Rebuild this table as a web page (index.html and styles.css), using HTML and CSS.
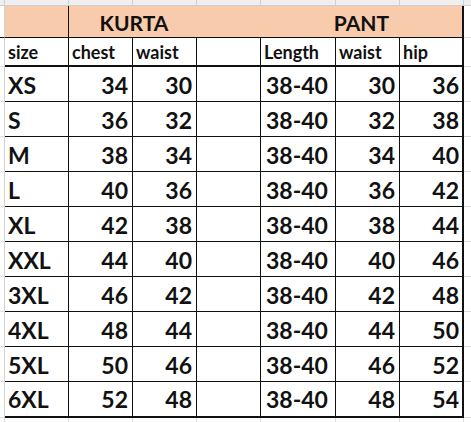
FILE: index.html
```html
<!DOCTYPE html>
<html>
<head>
<meta charset="utf-8">
<link rel="stylesheet" href="styles.css">
</head>
<body>
<div class="sheet">
  <div class="cell top"></div><div class="cell top"></div><div class="cell top"></div><div class="cell top"></div><div class="cell top"></div><div class="cell top"></div><div class="cell top"></div><div class="cell top"></div><div class="cell top end"></div>

  <div class="cell gut head-gut"></div>
  <div class="cell hd"></div>
  <div class="cell hd title kurta">KURTA</div>
  <div class="cell hd title pant">PANT</div>
  <div class="cell end head-end"></div>

  <div class="cell gut"></div>
  <div class="cell sub">size</div><div class="cell sub">chest</div><div class="cell sub">waist</div><div class="cell sub"></div>
  <div class="cell sub">Length</div><div class="cell sub">waist</div><div class="cell sub last">hip</div>
  <div class="cell end"></div>

  <div class="cell gut"></div><div class="cell bd lbl">XS</div><div class="cell bd num">34</div><div class="cell bd num">30</div><div class="cell bd"></div><div class="cell bd txt">38-40</div><div class="cell bd num">30</div><div class="cell bd num last">36</div><div class="cell end"></div>
  <div class="cell gut"></div><div class="cell bd lbl">S</div><div class="cell bd num">36</div><div class="cell bd num">32</div><div class="cell bd"></div><div class="cell bd txt">38-40</div><div class="cell bd num">32</div><div class="cell bd num last">38</div><div class="cell end"></div>
  <div class="cell gut"></div><div class="cell bd lbl">M</div><div class="cell bd num">38</div><div class="cell bd num">34</div><div class="cell bd"></div><div class="cell bd txt">38-40</div><div class="cell bd num">34</div><div class="cell bd num last">40</div><div class="cell end"></div>
  <div class="cell gut"></div><div class="cell bd lbl">L</div><div class="cell bd num">40</div><div class="cell bd num">36</div><div class="cell bd"></div><div class="cell bd txt">38-40</div><div class="cell bd num">36</div><div class="cell bd num last">42</div><div class="cell end"></div>
  <div class="cell gut"></div><div class="cell bd lbl">XL</div><div class="cell bd num">42</div><div class="cell bd num">38</div><div class="cell bd"></div><div class="cell bd txt">38-40</div><div class="cell bd num">38</div><div class="cell bd num last">44</div><div class="cell end"></div>
  <div class="cell gut"></div><div class="cell bd lbl">XXL</div><div class="cell bd num">44</div><div class="cell bd num">40</div><div class="cell bd"></div><div class="cell bd txt">38-40</div><div class="cell bd num">40</div><div class="cell bd num last">46</div><div class="cell end"></div>
  <div class="cell gut"></div><div class="cell bd lbl">3XL</div><div class="cell bd num">46</div><div class="cell bd num">42</div><div class="cell bd"></div><div class="cell bd txt">38-40</div><div class="cell bd num">42</div><div class="cell bd num last">48</div><div class="cell end"></div>
  <div class="cell gut"></div><div class="cell bd lbl">4XL</div><div class="cell bd num">48</div><div class="cell bd num">44</div><div class="cell bd"></div><div class="cell bd txt">38-40</div><div class="cell bd num">44</div><div class="cell bd num last">50</div><div class="cell end"></div>
  <div class="cell gut"></div><div class="cell bd lbl">5XL</div><div class="cell bd num">50</div><div class="cell bd num">46</div><div class="cell bd"></div><div class="cell bd txt">38-40</div><div class="cell bd num">46</div><div class="cell bd num last">52</div><div class="cell end"></div>
  <div class="cell gut"></div><div class="cell bd fin lbl">6XL</div><div class="cell bd fin num">52</div><div class="cell bd fin num">48</div><div class="cell bd fin"></div><div class="cell bd fin txt">38-40</div><div class="cell bd fin num">48</div><div class="cell bd fin num last">54</div><div class="cell end"></div>

  <div class="cell bot"></div><div class="cell bot"></div><div class="cell bot"></div><div class="cell bot"></div><div class="cell bot"></div><div class="cell bot"></div><div class="cell bot"></div><div class="cell bot"></div><div class="cell bot end"></div>
</div>
</body>
</html>
```

FILE: styles.css
```css
html, body {
  margin: 0;
  padding: 0;
  background: #ffffff;
  overflow: hidden;
}

.sheet {
  display: grid;
  grid-template-columns: 5px 64px 64px 64px 64px 75px 64px 64px 1fr;
  grid-template-rows: 6px 32px 29px repeat(9, 35px) 36px 20px;
  width: 471px;
  font-family: Lato, "Open Sans", sans-serif;
  font-weight: 700;
  color: #111111;
}

.cell {
  box-sizing: border-box;
  border-right: 1px solid #dadada;
  border-bottom: 1px solid #dadada;
  white-space: nowrap;
  overflow: hidden;
  display: flex;
  align-items: flex-end;
}

.top {
  background: #efefef;
  border-right-color: #d0d0d0;
  border-bottom-color: #cfcfcf;
}

.bot {
  border-bottom: none;
  border-right-color: #dcdcdc;
}

.end {
  border-right: none;
}

.gut {
  border-right-color: #d2d2d2;
  border-bottom-color: #e2e2e2;
}

.head-gut {
  border-bottom-color: #111111;
}

.hd {
  background: #f8cbad;
  border-right: 1px solid #111111;
  border-bottom: 1px solid #111111;
}

.title {
  font-size: 21px;
  line-height: 21px;
  padding-bottom: 4px;
  justify-content: center;
}

.kurta {
  grid-column: span 3;
  border-right: none;
  padding-right: 62px;
}

.pant {
  grid-column: span 3;
  border-right: 2px solid #111111;
}

.head-end {
  border-bottom-color: #e0e0e0;
}

.sub {
  font-size: 18px;
  line-height: 18px;
  padding: 0 0 4px 3px;
  border-right: 1px solid #111111;
  border-bottom: 2px solid #111111;
}

.bd {
  font-size: 23px;
  line-height: 23px;
  padding-bottom: 4px;
  border-right: 1px solid #111111;
  border-bottom: 1px solid #111111;
}

.lbl {
  padding-left: 3px;
}

.txt {
  padding-left: 5px;
}

.num {
  justify-content: flex-end;
  padding-right: 4px;
}

.cell.last {
  border-right: 2px solid #111111;
}

.num.last {
  padding-right: 3px;
}

.fin {
  border-bottom: 2px solid #111111;
  padding-bottom: 5px;
}
```
